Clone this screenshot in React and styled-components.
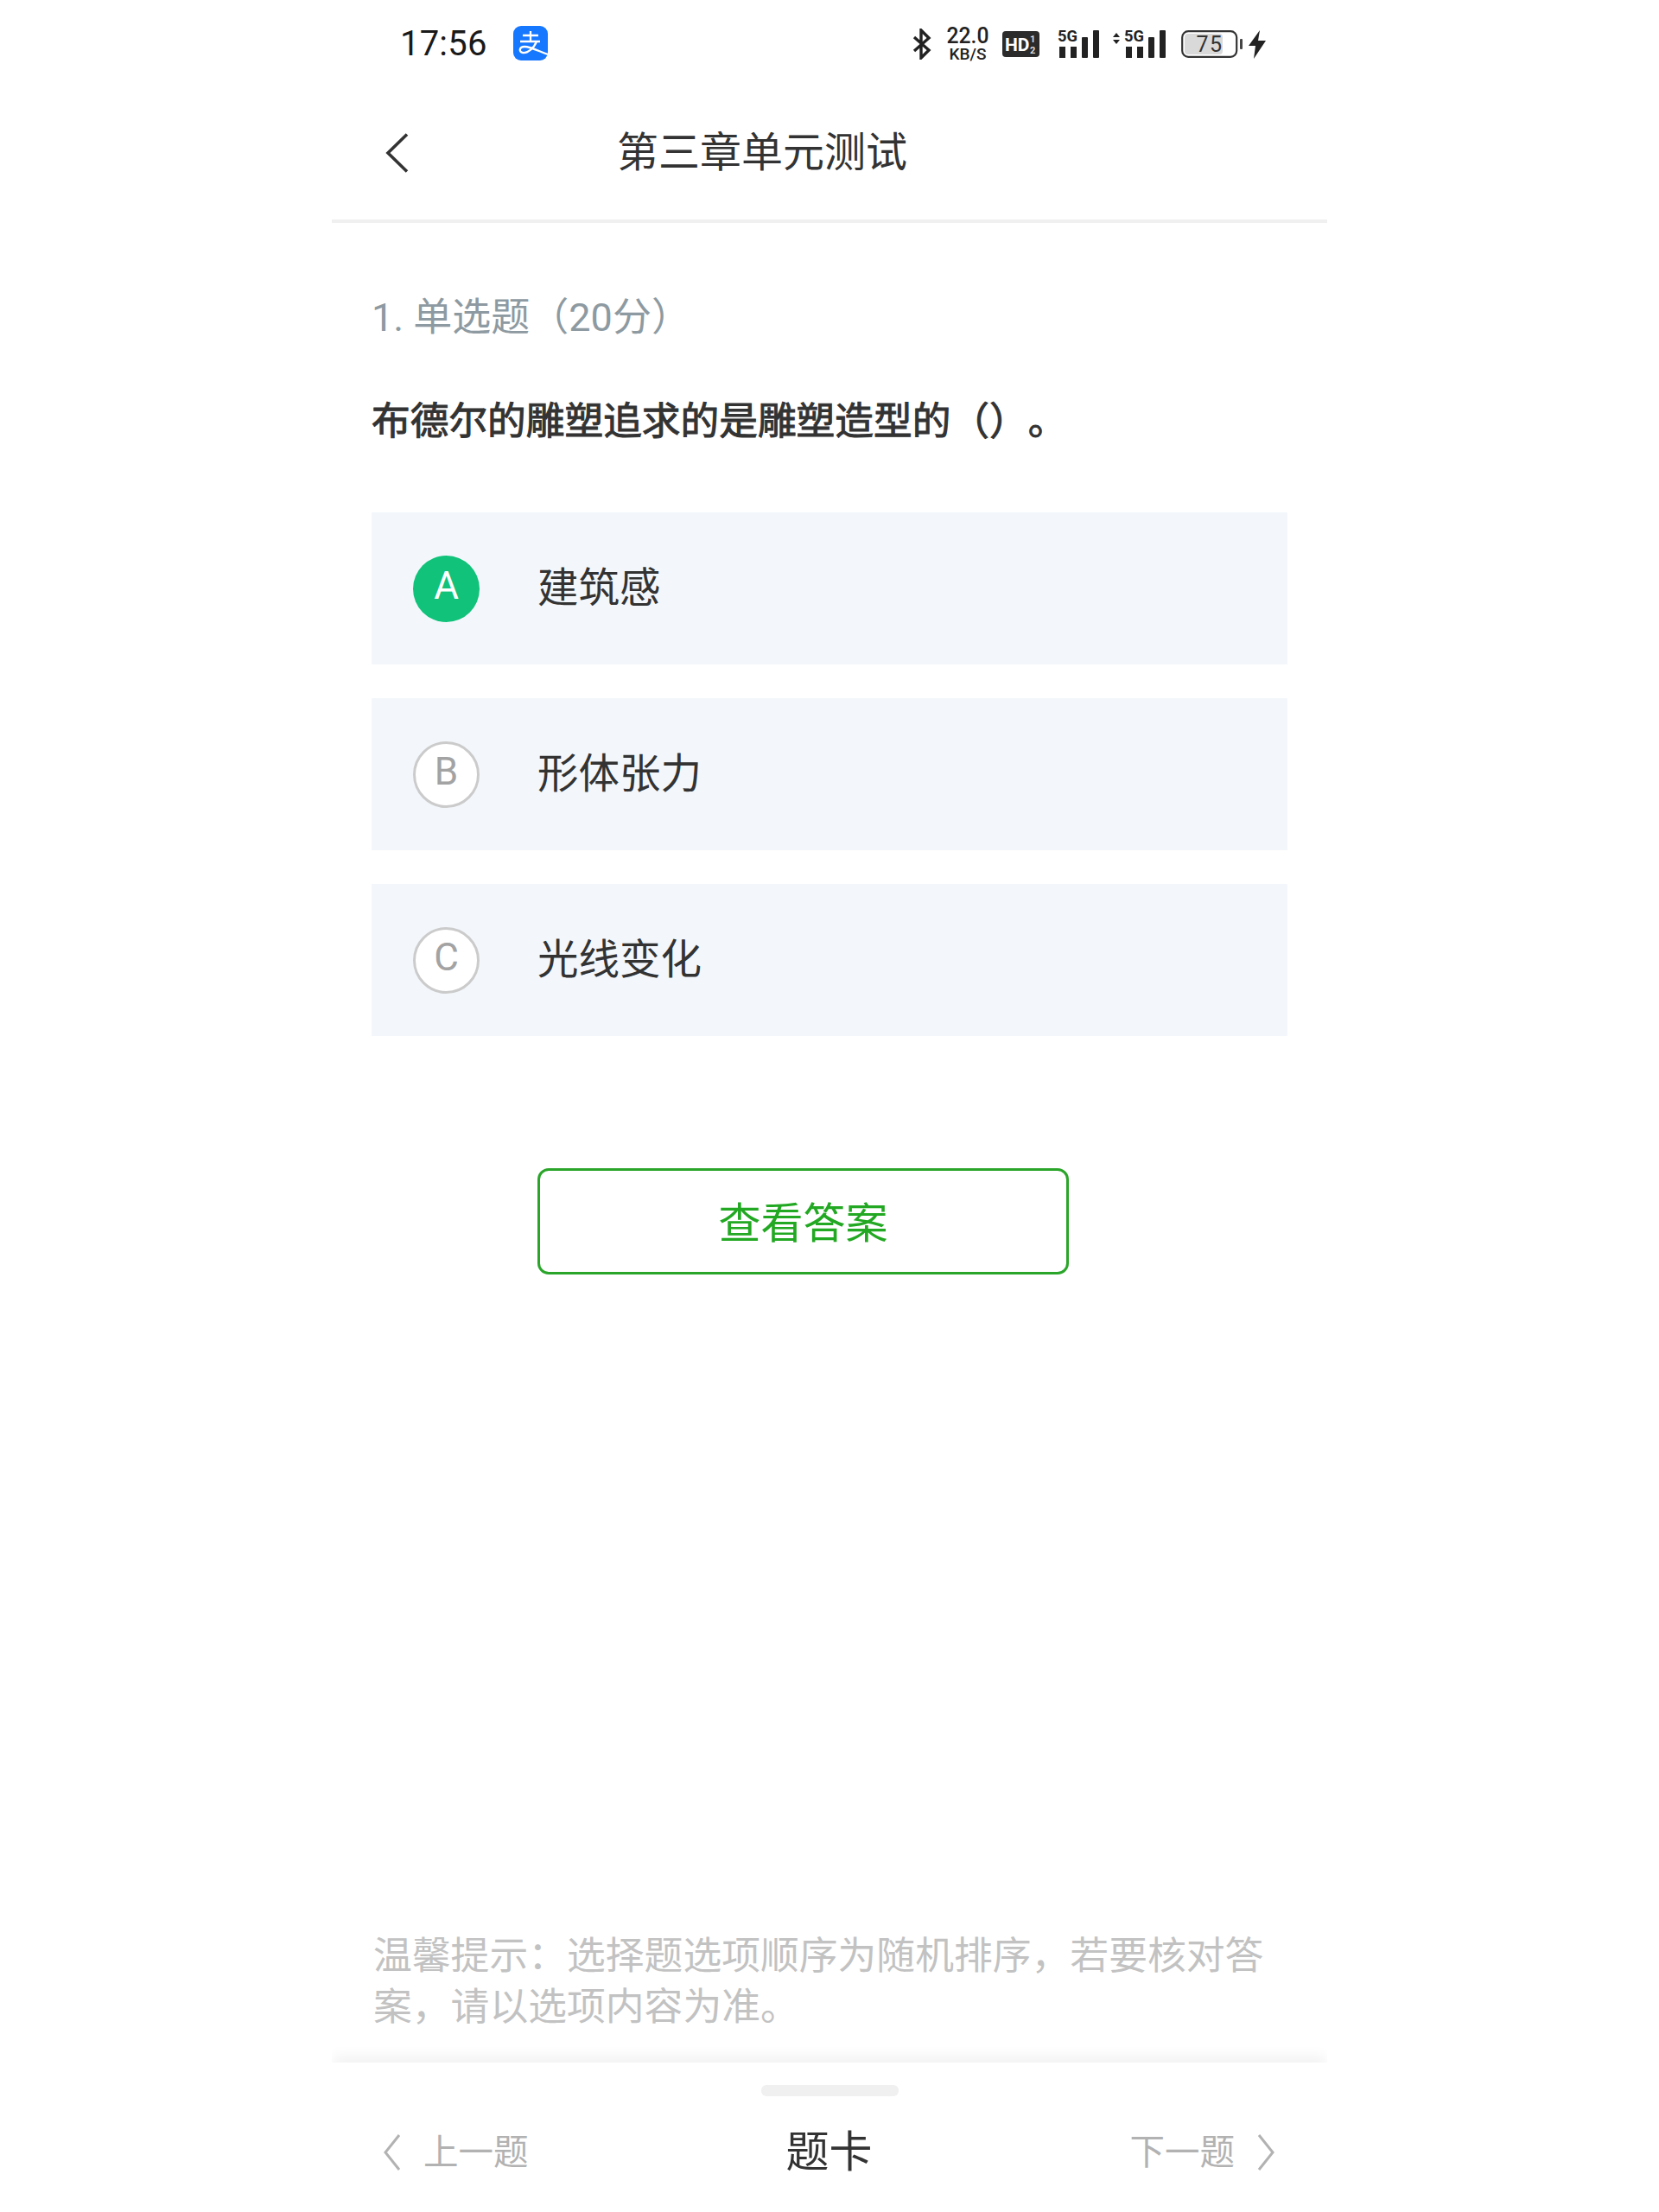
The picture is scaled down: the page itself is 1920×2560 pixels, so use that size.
import React from 'react';
import styled, { createGlobalStyle } from 'styled-components';

const cjk = '"Roboto", "Noto Sans CJK SC", sans-serif';

const Global = createGlobalStyle`
  html, body { margin: 0; padding: 0; background: #fff; }
  body { font-family: ${cjk}; }
`;

const Page = styled.div`
  width: 1152px;
  height: 2560px;
  margin: 0 auto;
  display: flex;
  flex-direction: column;
  background: #fff;
  overflow: hidden;
`;

const StatusBar = styled.div`
  height: 98px;
  display: flex;
  align-items: center;
  padding: 2px 71px 0 79px;
  flex-shrink: 0;
`;
const Time = styled.span`
  font-size: 40px;
  line-height: 98px;
  color: #1a1a1a;
  letter-spacing: 0.2px;
`;
const AppLogo = styled.svg`
  width: 40px;
  height: 40px;
  margin-left: 30px;
  margin-bottom: 2px;
`;
const StatusIcons = styled.div`
  margin-left: auto;
  display: flex;
  align-items: center;
`;
const Glyph = styled.svg`
  display: block;
  margin-left: ${p => p.$gap || 0}px;
`;

const Header = styled.header`
  height: 154px;
  border-bottom: 4px solid #f0f0f0;
  display: flex;
  align-items: center;
  padding-left: 62px;
  flex-shrink: 0;
`;
const Title = styled.h1`
  margin: 0 0 0 241px;
  font-size: 48px;
  line-height: 60px;
  font-weight: 400;
  color: #333;
`;

const Content = styled.main`
  flex: 1;
  display: flex;
  flex-direction: column;
  padding: 80px 46px 35px;
`;
const Meta = styled.div`
  font-size: 45px;
  line-height: 60px;
  color: #8e9aa1;
`;
const Question = styled.div`
  margin-top: 60px;
  font-size: 44.7px;
  line-height: 60px;
  font-weight: 400;
  color: #333;
  -webkit-text-stroke: 1px #333;
  text-spacing-trim: space-all;
`;
const Options = styled.div`
  margin-top: 75px;
  display: flex;
  flex-direction: column;
  gap: 39px;
`;
const Option = styled.div`
  height: 176px;
  background: #f3f7fb;
  display: flex;
  align-items: center;
  padding-left: 48px;
  gap: 67px;
`;
const Letter = styled.span`
  width: 77px;
  height: 77px;
  box-sizing: border-box;
  border-radius: 50%;
  display: flex;
  align-items: center;
  justify-content: center;
  font-size: 44px;
  font-weight: 400;
  padding-bottom: 6px;
  background: ${p => (p.$selected ? '#10c27a' : '#fff')};
  color: ${p => (p.$selected ? '#fff' : '#a3a3a3')};
  border: ${p => (p.$selected ? 'none' : '3px solid #cbcbcb')};
`;
const OptionText = styled.span`
  font-size: 47.5px;
  line-height: 60px;
  color: #333;
`;
const AnswerButton = styled.button`
  margin: 153px 0 0 192px;
  width: 615px;
  height: 123px;
  box-sizing: border-box;
  border: 3px solid #2aa52a;
  border-radius: 13px;
  background: #fff;
  color: #22a822;
  font-family: ${cjk};
  font-size: 49px;
  padding: 0 0 4px;
`;
const Hint = styled.p`
  margin: auto 0 0;
  font-size: 44.8px;
  line-height: 59px;
  color: #c2c2c2;
  padding-left: 2px;
`;

const Footer = styled.footer`
  height: 173px;
  flex-shrink: 0;
  display: flex;
  flex-direction: column;
  align-items: center;
  background: #fff;
  box-shadow: 0 -10px 14px -2px rgba(0, 0, 0, 0.05);
`;
const Handle = styled.div`
  width: 159px;
  height: 13px;
  margin-top: 26px;
  border-radius: 6px;
  background: #f0f0f0;
`;
const Nav = styled.nav`
  align-self: stretch;
  margin-top: 37px;
  padding: 0 60px 0 59px;
  display: grid;
  grid-template-columns: 1fr auto 1fr;
  align-items: center;
`;
const NavLink = styled.span`
  display: flex;
  align-items: center;
  justify-content: ${p => (p.$right ? 'flex-end' : 'flex-start')};
  gap: 26px;
  font-size: 40.5px;
  line-height: 56px;
  color: #b2b2b2;
`;
const CardLabel = styled.span`
  font-size: 50px;
  line-height: 56px;
  color: #333;
`;
const Chevron = styled.svg`
  display: block;
  fill: none;
  stroke: ${p => p.$color};
  stroke-width: ${p => p.$weight}px;
`;

const Mini = ({ x, y, size, weight = 700, children, anchor = 'start', length }) => (
  <text x={x} y={y} fontSize={size} fontWeight={weight} textAnchor={anchor} fontFamily="Roboto, sans-serif" fill="#222" textLength={length} lengthAdjust="spacingAndGlyphs">{children}</text>
);

const Signal = ({ arrows }) => (
  <Glyph $gap={arrows ? 14 : 21} width={arrows ? 63 : 49} height={46} viewBox={`0 -6 ${arrows ? 63 : 49} 46`}>
    {arrows && <path d="M5 4 9 9H1ZM5 17 9 12H1Z" fill="#222" />}
    <g transform={arrows ? 'translate(14 0)' : ''}>
      <Mini x={0} y={14} size={18} length={23}>5G</Mini>
      <rect x="2" y="20" width="7" height="13" fill="#222" />
      <rect x="15" y="20" width="7" height="13" fill="#222" />
      <rect x="28" y="9" width="7" height="24" rx="1" fill="#222" />
      <rect x="41" y="1" width="7" height="32" rx="1" fill="#222" />
    </g>
  </Glyph>
);

const options = [
  { key: 'A', text: '建筑感', selected: true },
  { key: 'B', text: '形体张力' },
  { key: 'C', text: '光线变化' },
];

export default function App() {
  return (
    <Page>
      <Global />
      <StatusBar>
        <Time>17:56</Time>
        <AppLogo viewBox="0 0 40 40">
          <rect width="40" height="40" rx="9" fill="#1677ff" />
          <path d="M11 11H29M20 6V17M8 18H31" stroke="#fff" strokeWidth="2.3" fill="none" />
          <path d="M27 18C24 26 16 32 11 31 6 30 7 24 13 24 20 24 29 29 40 33" stroke="#fff" strokeWidth="2.3" fill="none" />
        </AppLogo>
        <StatusIcons>
          <Glyph width={22} height={36} viewBox="0 0 22 36">
            <path d="M2 10 19 25 10 34V2L19 11 2 26" fill="none" stroke="#222" strokeWidth="3.4" />
          </Glyph>
          <Glyph $gap={17} width={50} height={52} viewBox="0 -7 50 52">
            <Mini x={25} y={18} size={25} anchor="middle" weight={500} length={49}>22.0</Mini>
            <Mini x={25} y={37} size={18.5} anchor="middle" weight={500} length={43}>KB/S</Mini>
          </Glyph>
          <Glyph $gap={15} width={43} height={36} viewBox="0 -3 43 36">
            <rect width="43" height="30" rx="4" fill="#2b2b2b" />
            <text x="3" y="23" fontSize="21" fontWeight="700" fontFamily="Roboto, sans-serif" fill="#fff">HD</text>
            <text x="32" y="13" fontSize="11" fontWeight="700" fontFamily="Roboto, sans-serif" fill="#ddd">1</text>
            <text x="32" y="26" fontSize="11" fontWeight="700" fontFamily="Roboto, sans-serif" fill="#ddd">2</text>
          </Glyph>
          <Signal />
          <Signal arrows />
          <Glyph $gap={17} width={72} height={32} viewBox="0 0 72 32">
            <rect x="1.2" y="1.2" width="63" height="29.6" rx="7" fill="#fff" stroke="#333" strokeWidth="2.2" />
            <rect x="4" y="4" width="44" height="24" rx="4" fill="#d9d9d9" />
            <text x="33" y="25" fontSize="25" fontFamily="Roboto, sans-serif" fill="#333" textAnchor="middle" letterSpacing="1.5">75</text>
            <rect x="68" y="10" width="3" height="12" rx="1" fill="#444" />
          </Glyph>
          <Glyph $gap={6} width={20} height={33} viewBox="0 0 20 33">
            <path d="M13 0 0 18H8L6 33 20 12H11Z" fill="#222" />
          </Glyph>
        </StatusIcons>
      </StatusBar>

      <Header>
        <Chevron $color="#333" $weight={3.6} width={27} height={46} viewBox="0 0 27 46">
          <path d="M25 1.5 3 23 25 44.5" />
        </Chevron>
        <Title>第三章单元测试</Title>
      </Header>

      <Content>
        <Meta>1. 单选题（20分）</Meta>
        <Question>布德尔的雕塑追求的是雕塑造型的（）。</Question>
        <Options>
          {options.map(o => (
            <Option key={o.key}>
              <Letter $selected={o.selected}>{o.key}</Letter>
              <OptionText>{o.text}</OptionText>
            </Option>
          ))}
        </Options>
        <AnswerButton>查看答案</AnswerButton>
        <Hint>温馨提示：选择题选项顺序为随机排序，若要核对答案，请以选项内容为准。</Hint>
      </Content>

      <Footer>
        <Handle />
        <Nav>
          <NavLink>
            <Chevron $color="#b2b2b2" $weight={3} width={21} height={42} viewBox="0 0 21 42">
              <path d="M19 1 3 21 19 41" />
            </Chevron>
            上一题
          </NavLink>
          <CardLabel>题卡</CardLabel>
          <NavLink $right>
            下一题
            <Chevron $color="#b2b2b2" $weight={3} width={21} height={42} viewBox="0 0 21 42">
              <path d="M2 1 18 21 2 41" />
            </Chevron>
          </NavLink>
        </Nav>
      </Footer>
    </Page>
  );
}
